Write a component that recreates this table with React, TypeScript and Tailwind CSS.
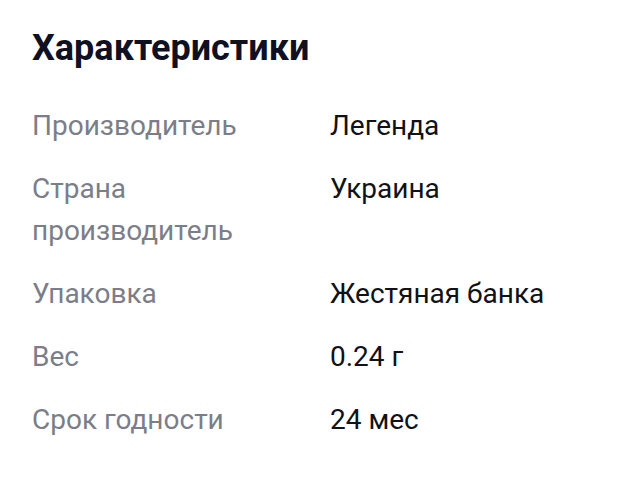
const specs = [
  { label: 'Производитель', value: 'Легенда' },
  { label: 'Страна производитель', value: 'Украина' },
  { label: 'Упаковка', value: 'Жестяная банка' },
  { label: 'Вес', value: '0.24 г' },
  { label: 'Срок годности', value: '24 мес' },
];

export default function App() {
  return (
    <div className="min-h-screen bg-white px-8 pt-6 font-['Roboto',sans-serif]">
      <h2 className="text-[36px] leading-[48px] font-bold text-[#0f1122]">Характеристики</h2>
      <dl className="mt-[33px] grid grid-cols-[298px_1fr] gap-y-[21px] text-[28px] leading-[42px]">
        {specs.map((s) => (
          <div key={s.label} className="contents">
            <dt className="text-[#7b7e88] pr-4">{s.label}</dt>
            <dd className="text-[#111216]">{s.value}</dd>
          </div>
        ))}
      </dl>
    </div>
  );
}
